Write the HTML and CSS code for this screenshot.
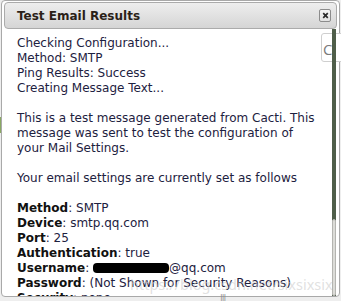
FILE: index.html
```html
<!DOCTYPE html>
<html lang="en">
<head>
  <meta charset="UTF-8">
  <title>Test Email Results</title>
  <link rel="stylesheet" href="styles.css">
</head>
<body>
  <div class="edge-green"></div>

  <div class="dialog">
    <div class="titlebar">
      <span class="title">Test Email Results</span>
      <button class="close" title="Close">
        <svg width="7" height="7" viewBox="0 0 7 7"><path d="M1.2 1.2L5.8 5.8M5.8 1.2L1.2 5.8" stroke="#2b2b2b" stroke-width="1.7"/></svg>
      </button>
    </div>

    <div class="body">
      <div class="content">
        <div>Checking Configuration...</div>
        <div>Method: SMTP</div>
        <div>Ping Results: Success</div>
        <div>Creating Message Text...</div>
        <br>
        <div>This is a test message generated from Cacti. This message was sent to test the configuration of your Mail Settings.</div>
        <br>
        <div>Your email settings are currently set as follows</div>
        <br>
        <div><b>Method</b>: SMTP</div>
        <div><b>Device</b>: smtp.qq.com</div>
        <div><b>Port</b>: 25</div>
        <div><b>Authentication</b>: true</div>
        <div><b>Username</b>: <span class="redact"></span>@qq.com</div>
        <div><b>Password</b>: (Not Shown for Security Reasons)</div>
        <div><b>Security</b>: none</div>
      </div>
      <div class="scroll">
        <div class="thumb"></div>
      </div>
    </div>

    <div class="watermark">https://blog.csdn.net/sixsixsix</div>
  </div>

  <!-- button of the page behind the dialog -->
  <div class="behind-btn">Cl</div>
  <div class="behind-mark">|||</div>
</body>
</html>
```

FILE: styles.css
```css
* {
  box-sizing: border-box;
}

body {
  margin: 0;
  background: #eeeeee;
  font-family: "DejaVu Sans", Verdana, sans-serif;
  font-size: 12px;
  position: relative;
  height: 301px;
  overflow: hidden;
}

.dialog {
  position: relative;
  margin-left: 1px;
  width: 339px;
  height: 297px;
  background: #fff;
  border: 1px solid #a9a9a9;
  border-radius: 4px;
  padding: 1px 2px 0 2px;
  display: flex;
  flex-direction: column;
  overflow: hidden;
}

.titlebar {
  height: 27px;
  flex: none;
  border: 1px solid #ababab;
  border-radius: 4px;
  background: linear-gradient(to bottom, #eeeeee, #d5d5d5);
  display: flex;
  align-items: center;
  justify-content: space-between;
  padding: 0 5px 0 12px;
}

.title {
  font-weight: bold;
  font-size: 12px;
  color: #2b1f18;
}

.close {
  width: 12px;
  height: 13px;
  padding: 0;
  border: 1px solid #8c8c8c;
  border-radius: 2px;
  background: linear-gradient(to bottom, #f6f6f6, #e2e2e2);
  display: flex;
  align-items: center;
  justify-content: center;
}

.body {
  flex: 1;
  display: flex;
  min-height: 0;
}

.content {
  flex: 1;
  padding: 7px 14px 0 13px;
  line-height: 15px;
  color: #1d2140;
}

.content b {
  color: #111;
}

.redact {
  display: inline-block;
  width: 76px;
  height: 10px;
  background: #000;
  border-radius: 4px;
  vertical-align: -1px;
}

.scroll {
  position: relative;
  z-index: 3;
  width: 4px;
  flex: none;
  margin-right: 1px;
  background: #4f5e49;
  display: flex;
  flex-direction: column;
  justify-content: flex-end;
}

.thumb {
  height: 77px;
  background: #dcdcd8;
  border: 1px solid #b4b4b0;
  border-radius: 3px;
}

.watermark {
  position: absolute;
  left: 128px;
  top: 273px;
  font-family: "Noto Sans", sans-serif;
  font-size: 14.5px;
  color: rgba(205, 205, 205, 0.6);
  white-space: nowrap;
}

.behind-btn {
  position: absolute;
  z-index: 2;
  left: 321px;
  top: 33px;
  width: 30px;
  height: 29px;
  background: #fff;
  border: 1px solid #cfcfcf;
  border-radius: 3px;
  padding: 5px 0 0 1px;
  font-family: "Open Sans", sans-serif;
  font-size: 15px;
  color: #7a7a7a;
}

.behind-mark {
  position: absolute;
  left: 220px;
  top: 294px;
  font-size: 8px;
  color: #8a8a8a;
  letter-spacing: -1px;
}

.edge-green {
  position: absolute;
  left: 0;
  top: 117px;
  width: 1px;
  height: 16px;
  background: #8aa863;
}
```
